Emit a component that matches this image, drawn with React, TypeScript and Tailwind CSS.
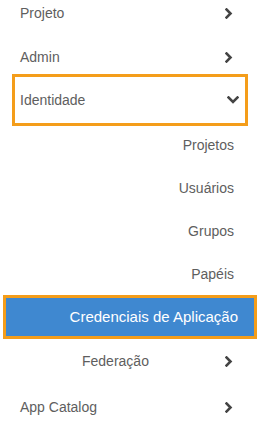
import React from "react";

function ChevronRight() {
  return (
    <svg width="8" height="11" viewBox="0 0 8 11" className="shrink-0">
      <polyline points="1.5,1.5 5.5,5.5 1.5,9.5" fill="none" stroke="#444" strokeWidth="2.6" strokeLinecap="square" />
    </svg>
  );
}

function ChevronDown() {
  return (
    <svg width="12" height="8" viewBox="0 0 12 8" className="shrink-0">
      <polyline points="1.5,1.5 6,6 10.5,1.5" fill="none" stroke="#444" strokeWidth="2.6" strokeLinecap="square" />
    </svg>
  );
}

const subItems = [
  { label: "Projetos", h: "h-[43px]" },
  { label: "Usuários", h: "h-[43px]" },
  { label: "Grupos", h: "h-[43px]" },
  { label: "Papéis", h: "h-[42px]" },
];

export default function App() {
  return (
    <div className="w-[260px] h-[431px] overflow-hidden bg-white font-['Liberation_Sans',Arial,sans-serif] text-[14px] text-[#5e5e5e]">
      <ul className="-mt-[9px]">
        <li className="flex h-[44px] items-center justify-between pl-5 pr-[27px]">
          <span>Projeto</span>
          <ChevronRight />
        </li>
        <li className="flex h-[44px] items-center justify-between pl-5 pr-[27px]">
          <span>Admin</span>
          <ChevronRight />
        </li>
        <li className="h-[45px]">
          <div className="mx-[17px] flex h-[42px] items-center justify-between pl-[3px] pr-[4px] outline-3 outline-offset-2 outline-[#f49d1a]">
            <span>Identidade</span>
            <ChevronDown />
          </div>
        </li>
        {subItems.map((item) => (
          <li key={item.label} className={`flex ${item.h} items-center justify-end pr-[26px]`}>
            {item.label}
          </li>
        ))}
        <li className="mx-[3px] flex h-[44px] items-center justify-end border-[3px] border-[#f49d1a] bg-[#3f88d0] pr-[16px] text-[15px] text-white">
          Credenciais de Aplicação
        </li>
        <li className="flex h-[45px] items-center justify-between pl-[82px] pr-[27px]">
          <span>Federação</span>
          <ChevronRight />
        </li>
        <li className="flex h-[46px] items-center justify-between pl-5 pr-[27px]">
          <span>App Catalog</span>
          <ChevronRight />
        </li>
      </ul>
    </div>
  );
}
